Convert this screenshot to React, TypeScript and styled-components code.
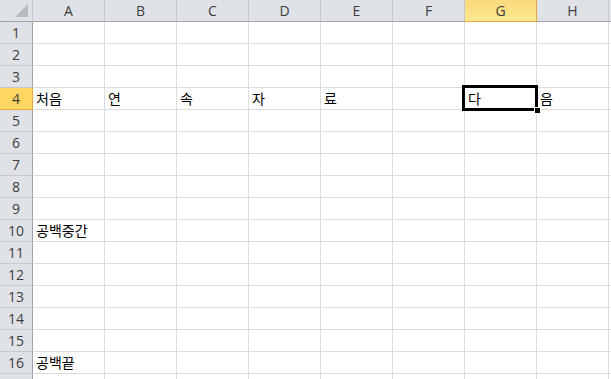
import styled, { createGlobalStyle } from "styled-components";

const Global = createGlobalStyle`
  html, body {
    margin: 0;
    padding: 0;
    background: #fff;
    overflow: hidden;
  }
`;

// last column (I) and last row (17) are only partly in view, so no label
const COLS = ["A", "B", "C", "D", "E", "F", "G", "H", ""];
const ROWS = 17;
const ACTIVE_COL = 6;
const ACTIVE_ROW = 4;

const data: Record<string, string> = {
  "4-0": "처음",
  "4-1": "연",
  "4-2": "속",
  "4-3": "자",
  "4-4": "료",
  "4-6": "다",
  "4-7": "음",
  "10-0": "공백중간",
  "16-0": "공백끝",
};

const Sheet = styled.div`
  position: relative;
  width: 611px;
  height: 379px;
  overflow: hidden;
  display: grid;
  grid-template-columns: 33px repeat(9, 72px);
  grid-auto-rows: 22px;
  font-family: "Noto Sans CJK KR", "Noto Sans", sans-serif;
`;

const Corner = styled.div`
  position: relative;
  background: #dfe3e8;
  border-right: 1px solid #c5c9cf;
  border-bottom: 1px solid #9ea2a8;

  &::after {
    content: "";
    position: absolute;
    right: 4px;
    bottom: 4px;
    border-left: 13px solid transparent;
    border-bottom: 13px solid #b9bdc3;
  }
`;

const ColHead = styled.div<{ $active?: boolean }>`
  display: flex;
  align-items: center;
  justify-content: center;
  font-family: "Open Sans", "Noto Sans", sans-serif;
  font-size: 14px;
  color: #3c3c3c;
  background: ${(p) =>
    p.$active ? "linear-gradient(#f9d97c, #ffe88f)" : "#dfe3e8"};
  border-right: 1px solid ${(p) => (p.$active ? "#e2a93c" : "#c5c9cf")};
  border-bottom: 1px solid ${(p) => (p.$active ? "#e2a93c" : "#9ea2a8")};
`;

const RowHead = styled.div<{ $active?: boolean }>`
  display: flex;
  align-items: center;
  justify-content: center;
  font-family: "Open Sans", "Noto Sans", sans-serif;
  font-size: 14px;
  color: #3c3c3c;
  background: ${(p) => (p.$active ? "#ffd65f" : "#dfe3e8")};
  border-right: 1px solid ${(p) => (p.$active ? "#e2a93c" : "#9ea2a8")};
  border-bottom: 1px solid ${(p) => (p.$active ? "#e2a93c" : "#c5c9cf")};
`;

const Cell = styled.div`
  border-right: 1px solid #dadcdd;
  border-bottom: 1px solid #dadcdd;
  font-size: 14px;
  color: #000;
  line-height: 21px;
  padding-left: 3px;
  white-space: nowrap;
`;

const Selection = styled.div`
  position: absolute;
  left: 462px;
  top: 85px;
  width: 70px;
  height: 20px;
  border: 3px solid #000;
  pointer-events: none;
`;

const Handle = styled.div`
  position: absolute;
  right: -6px;
  bottom: -6px;
  width: 5px;
  height: 5px;
  background: #000;
  border: 1px solid #fff;
`;

export default function App() {
  return (
    <>
      <Global />
      <Sheet>
        <Corner />
        {COLS.map((c, i) => (
          <ColHead key={i} $active={i === ACTIVE_COL}>
            {c}
          </ColHead>
        ))}
        {Array.from({ length: ROWS }, (_, r) => r + 1).map((r) => [
          <RowHead key={`h${r}`} $active={r === ACTIVE_ROW}>
            {r < ROWS ? r : ""}
          </RowHead>,
          ...COLS.map((_, c) => <Cell key={`${r}-${c}`}>{data[`${r}-${c}`]}</Cell>),
        ])}
        <Selection>
          <Handle />
        </Selection>
      </Sheet>
    </>
  );
}
